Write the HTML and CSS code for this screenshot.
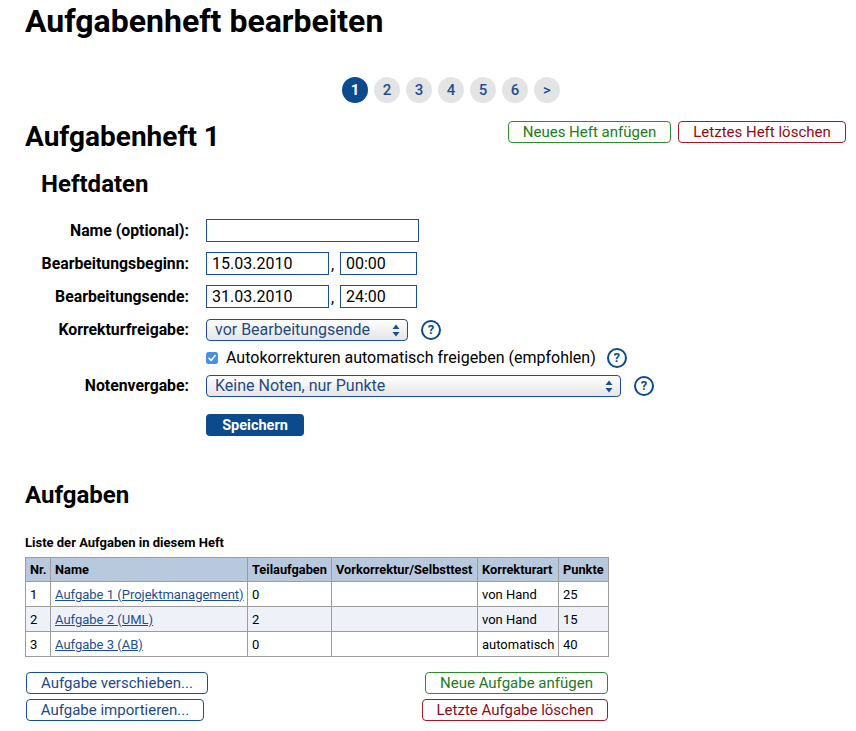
FILE: index.html
```html
<!DOCTYPE html>
<html lang="de">
<head>
<meta charset="utf-8">
<title>Aufgabenheft bearbeiten</title>
<link rel="stylesheet" href="styles.css">
</head>
<body>
<h1 class="title">Aufgabenheft bearbeiten</h1>

<nav class="pager">
  <span class="page active">1</span>
  <a class="page" href="#">2</a>
  <a class="page" href="#">3</a>
  <a class="page" href="#">4</a>
  <a class="page" href="#">5</a>
  <a class="page" href="#">6</a>
  <a class="page" href="#">&gt;</a>
</nav>

<div class="heft-head">
  <h2 class="heft-title">Aufgabenheft 1</h2>
  <div class="heft-actions">
    <button class="btn btn-green">Neues Heft anfügen</button>
    <button class="btn btn-red">Letztes Heft löschen</button>
  </div>
</div>

<h3 class="sub-title">Heftdaten</h3>

<form class="form">
  <label class="lbl">Name (optional):</label>
  <div class="field"><input class="inp inp-name" type="text" value=""></div>

  <label class="lbl">Bearbeitungsbeginn:</label>
  <div class="field"><input class="inp inp-date" type="text" value="15.03.2010"><span class="comma">,</span><input class="inp inp-time" type="text" value="00:00"></div>

  <label class="lbl">Bearbeitungsende:</label>
  <div class="field"><input class="inp inp-date" type="text" value="31.03.2010"><span class="comma">,</span><input class="inp inp-time" type="text" value="24:00"></div>

  <label class="lbl">Korrekturfreigabe:</label>
  <div class="field">
    <div class="sel sel-short"><span class="sel-text">vor Bearbeitungsende</span>
      <svg class="sel-arrows" width="8" height="13" viewBox="0 0 8 13"><path d="M4 0.5 L7.5 5 H0.5 Z M4 12.5 L7.5 8 H0.5 Z" fill="#1f4f8a"/></svg>
    </div>
    <span class="help">?</span>
  </div>

  <span class="lbl"></span>
  <div class="field check-row">
    <span class="check"><svg width="12" height="12" viewBox="0 0 12 12"><rect width="12" height="12" rx="2.5" fill="#4a90e2"/><path d="M3 6.3 L5.1 8.4 L9.2 3.6" stroke="#fff" stroke-width="1.5" fill="none" stroke-linecap="round" stroke-linejoin="round"/></svg></span>
    <span class="check-text">Autokorrekturen automatisch freigeben (empfohlen)</span>
    <span class="help">?</span>
  </div>

  <label class="lbl">Notenvergabe:</label>
  <div class="field">
    <div class="sel sel-long"><span class="sel-text">Keine Noten, nur Punkte</span>
      <svg class="sel-arrows" width="8" height="13" viewBox="0 0 8 13"><path d="M4 0.5 L7.5 5 H0.5 Z M4 12.5 L7.5 8 H0.5 Z" fill="#1f4f8a"/></svg>
    </div>
    <span class="help">?</span>
  </div>

  <span class="lbl"></span>
  <div class="field save-row"><button type="button" class="btn-save">Speichern</button></div>
</form>

<h3 class="sub-title tasks-title">Aufgaben</h3>

<div class="caption">Liste der Aufgaben in diesem Heft</div>
<table class="tbl">
  <thead>
    <tr><th class="c-nr">Nr.</th><th class="c-name">Name</th><th class="c-teil">Teilaufgaben</th><th class="c-vor">Vorkorrektur/Selbsttest</th><th class="c-art">Korrekturart</th><th class="c-pkt">Punkte</th></tr>
  </thead>
  <tbody>
    <tr><td>1</td><td><a href="#">Aufgabe 1 (Projektmanagement)</a></td><td>0</td><td></td><td>von Hand</td><td>25</td></tr>
    <tr class="alt"><td>2</td><td><a href="#">Aufgabe 2 (UML)</a></td><td>2</td><td></td><td>von Hand</td><td>15</td></tr>
    <tr><td>3</td><td><a href="#">Aufgabe 3 (AB)</a></td><td>0</td><td></td><td>automatisch</td><td>40</td></tr>
  </tbody>
</table>

<div class="bottom">
  <div class="col col-left">
    <button class="btn btn-blue btn-move">Aufgabe verschieben...</button>
    <button class="btn btn-blue btn-import">Aufgabe importieren...</button>
  </div>
  <div class="col col-right">
    <button class="btn btn-green btn-new">Neue Aufgabe anfügen</button>
    <button class="btn btn-red btn-del">Letzte Aufgabe löschen</button>
  </div>
</div>
</body>
</html>
```

FILE: styles.css
```css
* { box-sizing: border-box; }

body {
  margin: 0;
  padding: 0 10px 0 25px;
  font-family: Roboto, "Liberation Sans", Arial, sans-serif;
  color: #000;
  background: #fff;
}

.title {
  margin: 0;
  padding-top: 3px;
  font-size: 32px;
  line-height: 37px;
  font-weight: 700;
}

.pager {
  display: flex;
  gap: 6px;
  margin-top: 37px;
  padding-left: 317px;
}

.page {
  width: 26px;
  height: 26px;
  border-radius: 50%;
  background: #e4e4e4;
  color: #1b4f93;
  font-size: 15px;
  font-weight: 500;
  display: flex;
  align-items: center;
  justify-content: center;
  text-decoration: none;
}

.page.active {
  background: #0b4a8c;
  color: #fff;
  font-weight: 700;
}

.heft-head {
  display: flex;
  justify-content: space-between;
  align-items: flex-start;
  margin-top: 18px;
}

.heft-title {
  margin: 0;
  font-size: 28px;
  line-height: 32px;
  font-weight: 700;
}

.heft-actions {
  display: flex;
  gap: 7px;
  padding-top: 0;
}

.btn {
  font-family: inherit;
  font-size: 15px;
  height: 22px;
  padding: 0 6px;
  background: #fff;
  border-radius: 4px;
  border: 1px solid;
  line-height: 20px;
  cursor: pointer;
  white-space: nowrap;
}

.btn-green { color: #217a21; border-color: #2c8c2c; }
.btn-red { color: #8c0c14; border-color: #a01c24; }
.btn-blue { color: #1b4a8a; border-color: #1b4f93; }

.heft-actions .btn-green { width: 163px; }
.heft-actions .btn-red { width: 168px; }

.sub-title {
  margin: 17px 0 0 16px;
  font-size: 24px;
  line-height: 28px;
  font-weight: 700;
}

.form {
  display: grid;
  grid-template-columns: 164px auto;
  column-gap: 17px;
  row-gap: 10px;
  margin-top: 21px;
  align-items: center;
}

.lbl {
  text-align: right;
  font-size: 15.8px;
  font-weight: 700;
  white-space: nowrap;
}

.field {
  display: flex;
  align-items: center;
  height: 23px;
}

.inp {
  font-family: inherit;
  font-size: 16px;
  height: 23px;
  border: 1px solid #1b4f93;
  border-radius: 0;
  padding: 0 5px;
  color: #000;
  background: #fff;
}

.inp-name { width: 213px; }
.inp-date { width: 123px; }
.inp-time { width: 77px; }

.comma {
  width: 11px;
  font-size: 16px;
  padding-left: 2px;
  align-self: flex-end;
  line-height: 20px;
}

.sel {
  position: relative;
  height: 22px;
  border: 1px solid #1b4f93;
  border-radius: 4px;
  background: linear-gradient(#ffffff, #f1f1f1 50%, #e6e6e6);
  display: flex;
  align-items: center;
  padding-left: 8px;
  font-size: 16px;
  color: #1f4a85;
}

.sel-short { width: 202px; }
.sel-long { width: 415px; }

.sel-arrows {
  position: absolute;
  right: 7px;
  top: 4px;
}

.help {
  width: 20px;
  height: 20px;
  border: 2px solid #0b4a8c;
  border-radius: 50%;
  color: #0b4a8c;
  font-weight: 700;
  font-size: 13px;
  display: flex;
  align-items: center;
  justify-content: center;
  margin-left: 13px;
}

.check-row {
  height: 15px;
  margin-top: -1px;
  margin-bottom: -1px;
}

.check {
  display: flex;
  width: 12px;
  height: 12px;
  margin-right: 8px;
}

.check-text {
  font-size: 16px;
}

.check-row .help { margin-left: 11px; }

.save-row {
  margin-top: 7px;
  height: 22px;
}

.btn-save {
  font-family: inherit;
  width: 98px;
  height: 22px;
  border: none;
  border-radius: 4px;
  background: #0b4a8c;
  color: #fff;
  font-size: 14.5px;
  font-weight: 700;
  cursor: pointer;
}

.tasks-title {
  margin: 45px 0 0 0;
}

.caption {
  margin-top: 26px;
  font-size: 13px;
  font-weight: 700;
}

.tbl {
  border-collapse: collapse;
  table-layout: fixed;
  width: 584px;
  margin-top: 7px;
  font-size: 13px;
}

.tbl th, .tbl td {
  border: 1px solid #9c9c9c;
  padding: 0 4px;
  height: 25px;
  text-align: left;
  white-space: nowrap;
  overflow: visible;
}

.tbl th {
  background: #b9c9dd;
  font-weight: 700;
  font-size: 12.8px;
  height: 24px;
}

.c-nr { width: 25px; }
.c-name { width: 197px; }
.c-teil { width: 84px; }
.c-vor { width: 146px; }
.c-art { width: 81px; }
.c-pkt { width: 50px; }

.tbl tr.alt td { background: #eef1f8; }

.tbl a { color: #1b4f93; }

.bottom {
  display: flex;
  justify-content: space-between;
  width: 583px;
  margin-top: 15px;
}

.col {
  display: flex;
  flex-direction: column;
  gap: 5px;
}

.col-left { align-items: flex-start; padding-left: 1px; }
.col-right { align-items: flex-end; }

.btn-move { width: 182px; }
.btn-import { width: 178px; }
.btn-new { width: 183px; }
.btn-del { width: 186px; }
```
